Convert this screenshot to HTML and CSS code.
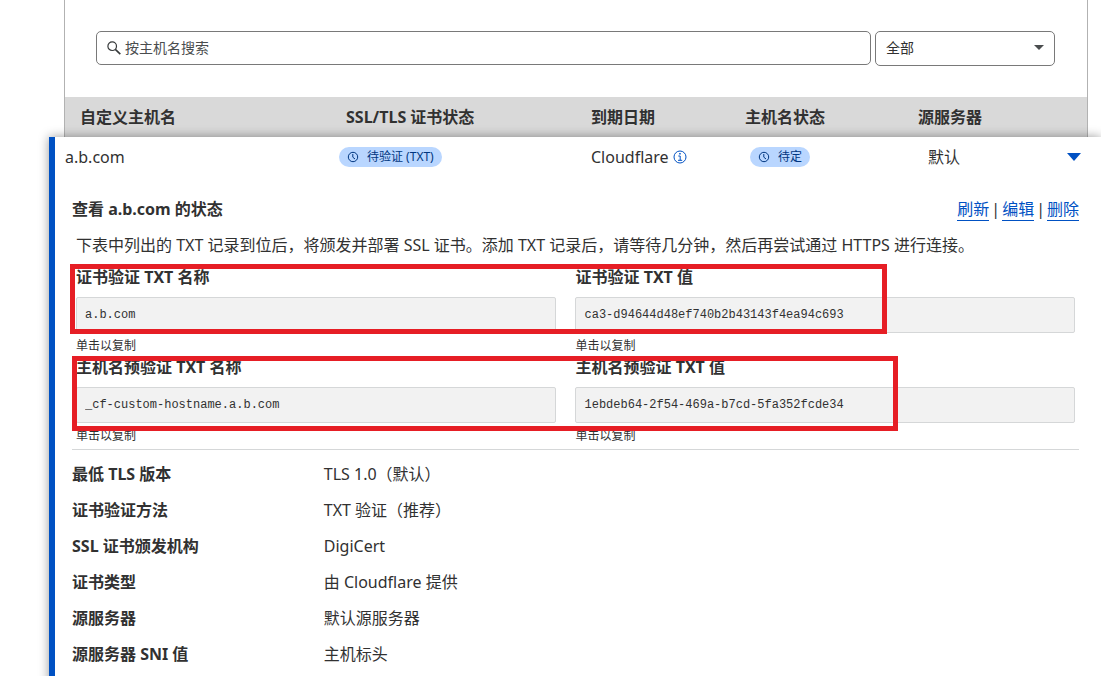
FILE: index.html
```html
<!DOCTYPE html>
<html lang="zh-CN">
    <head>
        <meta charset="UTF-8" />
        <meta name="viewport" content="width=device-width, initial-scale=1.0" />
        <title>自定义主机名</title>
        <link rel="stylesheet" href="styles.css">
    </head>

    <body>
        <!-- 搜索和筛选 -->
        <form class="filters">
            <label class="search">
                <svg width="14" height="14" viewBox="0 0 14 14" fill="none" stroke="#36393a" stroke-width="1.2">
                    <circle cx="5.2" cy="5.2" r="4.3" />
                    <path d="M8.3 8.3L13.3 13.1" stroke-width="1.6" />
                </svg>
                <input type="text" placeholder="按主机名搜索" aria-label="按主机名搜索" />
            </label>
            <div class="select">
                <select aria-label="状态">
                    <option>全部</option>
                </select>
                <svg width="10" height="5" viewBox="0 0 10 5"><path d="M0 0H10L5 5Z" fill="#4a4d4e" /></svg>
            </div>
        </form>

        <table class="hostnames">
            <thead>
                <tr>
                    <th>自定义主机名</th>
                    <th>SSL/TLS 证书状态</th>
                    <th>到期日期</th>
                    <th>主机名状态</th>
                    <th>源服务器</th>
                </tr>
            </thead>
            <tbody>
                <tr class="host-row">
                    <td>a.b.com</td>
                    <td>
                        <span class="pill">
                            <svg width="12" height="12" viewBox="0 0 12 12" fill="none" stroke="#003681">
                                <circle cx="6" cy="6" r="4.7" />
                                <path d="M5.8 3V6.2L8 8" />
                            </svg>
                            待验证 (TXT)
                        </span>
                    </td>
                    <td>
                        Cloudflare
                        <svg width="14" height="14" viewBox="0 0 14 14" fill="none" stroke="#0051c3">
                            <circle cx="7" cy="7" r="6" />
                            <path d="M5.3 6H7.2V10.3M5 10.3H9.2" />
                            <path d="M6.2 3.7H7.7" stroke-width="1.5" />
                        </svg>
                    </td>
                    <td>
                        <span class="pill">
                            <svg width="12" height="12" viewBox="0 0 12 12" fill="none" stroke="#003681">
                                <circle cx="6" cy="6" r="4.7" />
                                <path d="M5.8 3V6.2L8 8" />
                            </svg>
                            待定
                        </span>
                    </td>
                    <td>默认</td>
                    <td>
                        <button class="toggle" type="button" aria-label="收起">
                            <svg width="14" height="8" viewBox="0 0 14 8"><path d="M0 0H14L7 8Z" fill="#0051c3" /></svg>
                        </button>
                    </td>
                </tr>
                <tr class="detail-row">
                    <td class="details" colspan="6">
                        <div class="details-head">
                            <h2>查看 a.b.com 的状态</h2>
                            <div class="actions">
                                <a href="#">刷新</a><span>|</span><a href="#">编辑</a><span>|</span><a href="#">删除</a>
                            </div>
                        </div>
                        <p class="intro">下表中列出的 TXT 记录到位后，将颁发并部署 SSL 证书。添加 TXT 记录后，请等待几分钟，然后再尝试通过 HTTPS 进行连接。</p>

                        <div class="records">
                            <div class="field">
                                <label for="cert-name">证书验证 TXT 名称</label>
                                <input id="cert-name" type="text" value="a.b.com" readonly />
                                <button type="button">单击以复制</button>
                            </div>
                            <div class="field">
                                <label for="cert-value">证书验证 TXT 值</label>
                                <input id="cert-value" type="text" value="ca3-d94644d48ef740b2b43143f4ea94c693" readonly />
                                <button type="button">单击以复制</button>
                            </div>
                            <div class="field">
                                <label for="host-name">主机名预验证 TXT 名称</label>
                                <input id="host-name" type="text" value="_cf-custom-hostname.a.b.com" readonly />
                                <button type="button">单击以复制</button>
                            </div>
                            <div class="field">
                                <label for="host-value">主机名预验证 TXT 值</label>
                                <input id="host-value" type="text" value="1ebdeb64-2f54-469a-b7cd-5fa352fcde34" readonly />
                                <button type="button">单击以复制</button>
                            </div>
                        </div>

                        <!-- 红框标注 -->
                        <div class="mark mark-cert"></div>
                        <div class="mark mark-host"></div>

                        <dl class="props">
                            <dt>最低 TLS 版本</dt>
                            <dd>TLS 1.0（默认）</dd>
                            <dt>证书验证方法</dt>
                            <dd>TXT 验证（推荐）</dd>
                            <dt>SSL 证书颁发机构</dt>
                            <dd>DigiCert</dd>
                            <dt>证书类型</dt>
                            <dd>由 Cloudflare 提供</dd>
                            <dt>源服务器</dt>
                            <dd>默认源服务器</dd>
                            <dt>源服务器 SNI 值</dt>
                            <dd>主机标头</dd>
                        </dl>
                    </td>
                </tr>
            </tbody>
        </table>
    </body>
</html>
```
FILE: styles.css
```css
* {
    box-sizing: border-box;
    margin: 0;
    padding: 0;
}
body {
    height: 100vh;
    overflow: hidden;
    background: #fff;
    color: #313131;
    font: 16px/24px "Noto Sans", "Noto Sans CJK SC", sans-serif;
}
input,
select,
button {
    font: inherit;
    color: inherit;
}
svg {
    display: block;
    flex: none;
}

/* 搜索和筛选 */
.filters {
    display: flex;
    align-items: flex-start;
    gap: 4px;
    margin: 0 13px 0 64px;
    padding: 31px 32px 31px 31px;
    border: solid #b2b2b2;
    border-width: 0 1px;
    font-size: 14px;
}
.search {
    flex: 1;
    display: flex;
    align-items: center;
    gap: 4px;
    height: 34px;
    padding: 0 10px;
    border: 1px solid #797979;
    border-radius: 5px;
}
.search input {
    flex: 1;
    border: 0;
    outline: 0;
    background: none;
}
.search input::placeholder {
    color: #4a4d4e;
    opacity: 1;
}
.select {
    position: relative;
    width: 180px;
}
.select select {
    display: block;
    width: 100%;
    height: 35px;
    padding: 0 10px 2px;
    border: 1px solid #797979;
    border-radius: 5px;
    background: #fff;
    appearance: none;
}
.select svg {
    position: absolute;
    top: 14px;
    right: 11px;
    pointer-events: none;
}

/* 主机名表格 */
.hostnames,
.hostnames thead,
.hostnames tbody,
.detail-row,
.details {
    display: block;
}
.hostnames thead tr {
    display: grid;
    grid-template-columns: 266fr 245fr 154fr 173fr 184fr;
    align-items: center;
    height: 40px;
    margin: 0 13px 0 64px;
    border: solid #b2b2b2;
    border-width: 0 1px;
    background: #d9d9d9;
}
.hostnames th {
    padding-left: 15px;
    text-align: left;
    font-weight: bold;
}
.hostnames tbody {
    position: relative;
    margin-left: 49px;
    border-left: 6px solid #0051c3;
    background: #fff;
    box-shadow: 0 0 10px rgba(0, 0, 0, 0.4);
}
.host-row {
    display: grid;
    grid-template-columns: 274fr 252fr 159fr 178fr 139fr 34fr;
    align-items: center;
    height: 40px;
    padding-left: 10px;
}
.host-row td {
    display: flex;
    align-items: center;
    gap: 4px;
}
.pill {
    display: flex;
    align-items: center;
    gap: 8px;
    height: 20px;
    padding: 0 8px;
    border-radius: 10px;
    background: #b9d6ff;
    color: #003681;
    font-size: 12px;
    line-height: 20px;
}
.toggle {
    border: 0;
    background: none;
}

/* 展开的详情 */
.details {
    position: relative;
    padding: 20px 22px 24px 17px;
}
.details-head {
    display: flex;
    justify-content: space-between;
}
.details-head h2 {
    font-size: 16px;
}
.actions {
    display: flex;
    gap: 2px;
}
.actions a {
    height: 24px;
    border-bottom: 1px solid #0051c3;
    color: #0051c3;
    text-decoration: none;
}
.intro {
    margin: 12px 0 8px;
    padding-left: 4px;
}
.records {
    display: grid;
    grid-template-columns: 480fr 499fr;
    column-gap: 19px;
    padding: 0 4px 4px;
    border-bottom: 1px solid #d5d7d8;
}
.field label {
    display: block;
    margin-bottom: 8px;
    font-weight: bold;
}
.field input {
    display: block;
    width: 100%;
    height: 36px;
    padding: 0 8px;
    border: 1px solid #d5d7d8;
    border-radius: 2px;
    outline: 0;
    background: #f2f2f2;
    font: 12px/18px "Liberation Mono", monospace;
}
.field button {
    display: block;
    margin-top: 4px;
    border: 0;
    background: none;
    font-size: 12px;
    line-height: 18px;
}
.mark {
    position: absolute;
    border: 5px solid #e61e25;
    pointer-events: none;
}
.mark-cert {
    top: 87px;
    left: 15px;
    width: 817px;
    height: 70px;
}
.mark-host {
    top: 179px;
    left: 17px;
    width: 826px;
    height: 75px;
}
.props {
    display: grid;
    grid-template-columns: 1fr 3fr;
    padding-top: 6px;
    line-height: 36px;
}
.props dt {
    font-weight: bold;
}
```
